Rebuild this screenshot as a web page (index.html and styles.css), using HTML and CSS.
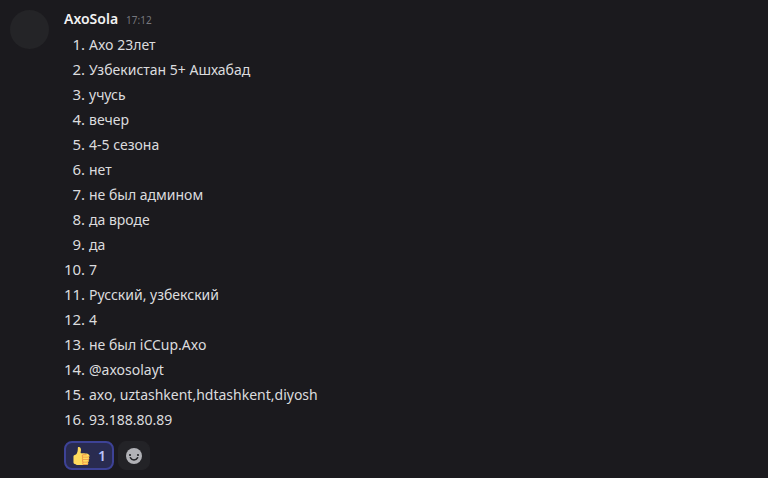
FILE: index.html
```html
<!DOCTYPE html>
<html lang="ru">
<head>
    <meta charset="UTF-8">
    <title>AxoSola</title>
    <link rel="stylesheet" href="styles.css">
</head>
<body>
    <article class="message">
        <div class="avatar"></div>
        <div class="message-body">
            <header class="message-header">
                <h3 class="username">AxoSola</h3>
                <time class="timestamp">17:12</time>
            </header>
            <ol class="answers">
                <li>Axo 23лет</li>
                <li>Узбекистан 5+ Ашхабад</li>
                <li>учусь</li>
                <li>вечер</li>
                <li>4-5 сезона</li>
                <li>нет</li>
                <li>не был админом</li>
                <li>да вроде</li>
                <li>да</li>
                <li>7</li>
                <li>Русский, узбекский</li>
                <li>4</li>
                <li>не был iCCup.Axo</li>
                <li>@axosolayt</li>
                <li>axo, uztashkent,hdtashkent,diyosh</li>
                <li>93.188.80.89</li>
            </ol>
            <div class="reactions">
                <button type="button" class="reaction reacted" aria-pressed="true">
                    <svg class="thumb" viewBox="0 0 36 36" aria-hidden="true">
                        <path fill="#ffdb5e" d="M34.956 17.916c0-.503-.12-.975-.321-1.404-1.341-4.326-7.619-4.01-16.549-4.221-1.493-.035-.639-1.798-.115-5.668.341-2.517-1.282-6.382-4.01-6.382-4.498 0-.171 3.548-4.148 12.322-2.125 4.688-6.875 2.062-6.875 6.771v10.719c0 1.833.18 3.595 2.758 3.885C8.195 34.219 7.633 36 11.238 36h18.044c1.838 0 3.333-1.496 3.333-3.334 0-.762-.267-1.456-.698-2.018 1.02-.571 1.72-1.649 1.72-2.899 0-.76-.266-1.454-.696-2.015 1.023-.57 1.725-1.649 1.725-2.901 0-.909-.368-1.733-.961-2.336.757-.611 1.251-1.535 1.251-2.581z"/>
                        <path fill="#ee9547" d="M23.02 21.249h8.604c1.17 0 2.268-.626 2.866-1.633.246-.415.109-.952-.307-1.199-.415-.247-.952-.108-1.199.307-.283.479-.806.775-1.361.775h-8.81c-.873 0-1.583-.71-1.583-1.583s.71-1.583 1.583-1.583H28.7c.483 0 .875-.392.875-.875s-.392-.875-.875-.875h-5.888c-1.838 0-3.333 1.495-3.333 3.333 0 1.025.475 1.932 1.205 2.544-.615.605-.998 1.445-.998 2.373 0 1.028.478 1.938 1.212 2.549-.611.604-.99 1.441-.99 2.367 0 1.12.559 2.108 1.409 2.713-.524.589-.852 1.356-.852 2.204 0 1.838 1.495 3.333 3.333 3.333h5.484c1.17 0 2.269-.625 2.867-1.632.247-.415.11-.952-.305-1.199-.416-.245-.953-.11-1.199.305-.285.479-.808.776-1.363.776h-5.484c-.873 0-1.583-.71-1.583-1.583s.71-1.584 1.583-1.584h6.506c1.17 0 2.27-.626 2.867-1.633.247-.416.11-.953-.305-1.199-.419-.251-.954-.11-1.199.305-.289.487-.799.777-1.363.777h-7.063c-.873 0-1.583-.711-1.583-1.584s.71-1.583 1.583-1.583h8.091c1.17 0 2.269-.625 2.867-1.632.247-.415.11-.952-.305-1.199-.417-.246-.953-.11-1.199.305-.289.486-.799.776-1.363.776H23.02c-.873 0-1.583-.71-1.583-1.583s.71-1.584 1.583-1.584z"/>
                    </svg>
                    <span class="count">1</span>
                </button>
                <button type="button" class="reaction add-reaction" aria-label="Добавить реакцию">
                    <svg class="smile" viewBox="0 0 24 24" aria-hidden="true">
                        <circle cx="12" cy="12" r="12" fill="#b1b2b7"/>
                        <circle cx="6" cy="10.500" r="1.600" fill="#222327"/>
                        <circle cx="18" cy="10.500" r="1.600" fill="#222327"/>
                        <path d="M6.500 14.500c2.600 4.800 8.400 4.800 11 0" fill="none" stroke="#222327" stroke-width="2.200" stroke-linecap="round"/>
                    </svg>
                </button>
            </div>
        </div>
    </article>
</body>
</html>
```
FILE: styles.css
```css
body {
    margin: 0;
    background-color: #1b1a1e;
    color: #dcdcde;
    font-family: 'Noto Sans', 'Open Sans', sans-serif;
    font-size: 14px;
}
.message {
    display: flex;
    gap: 15px;
    padding: 10px;
}
.avatar {
    flex: none;
    width: 39px;
    height: 39px;
    border-radius: 50%;
    background-color: #242427;
}
.message-body {
    flex: 1;
}
.message-header {
    display: flex;
    align-items: baseline;
    gap: 8px;
    line-height: 18px;
}
.username {
    margin: 0;
    color: #f2f2f3;
    font-size: 14px;
    font-weight: 600;
}
.timestamp {
    color: #76777d;
    font-size: 10px;
}
.answers {
    margin: 3px 0 0;
    padding-left: 25px;
}
.answers li {
    line-height: 25px;
}
.answers li::marker {
    font-size: 15px;
}
.reactions {
    display: flex;
    gap: 4px;
    margin-top: 9px;
}
.reaction {
    display: flex;
    align-items: center;
    justify-content: center;
    gap: 8px;
    height: 29px;
    padding: 0 7px;
    border: 1px solid #232327;
    border-radius: 8px;
    background-color: #232327;
    font-family: inherit;
    cursor: pointer;
}
.reacted {
    padding: 0 6px;
    border: 2px solid #3d4296;
    background-color: #292b50;
    color: #b9c3fb;
}
.thumb {
    width: 18px;
    height: 18px;
}
.count {
    font-size: 14px;
    font-weight: 600;
}
.smile {
    width: 16px;
    height: 16px;
}
```
